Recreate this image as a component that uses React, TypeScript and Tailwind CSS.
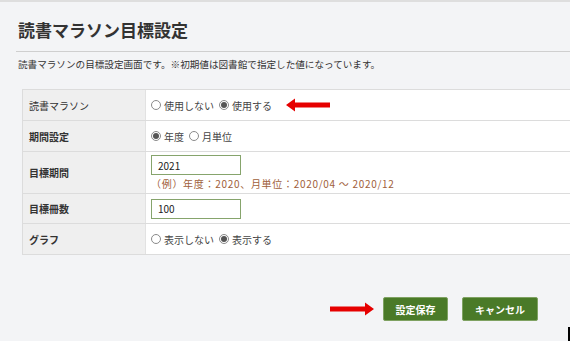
import React from "react";

const FONT = { fontFamily: '"Noto Sans CJK JP", "Noto Sans", sans-serif' };

function Radio({ checked, label }: { checked?: boolean; label: string }) {
  return (
    <span className="inline-flex items-center">
      <span className="w-[10px] h-[10px] rounded-full border border-[#8a8a8a] bg-white flex items-center justify-center mr-[3px]">
        {checked && <span className="w-[6px] h-[6px] rounded-full bg-[#555]" />}
      </span>
      <span className="mr-[5px]">{label}</span>
    </span>
  );
}

function Arrow({ dir }: { dir: "left" | "right" }) {
  return (
    <svg
      width="44"
      height="14"
      viewBox="0 0 44 14"
      className={dir === "left" ? "" : "rotate-180"}
    >
      <path d="M0 7L9 0.5V4.5H44V9.5H9V13.5Z" fill="#e60000" />
    </svg>
  );
}

function Row({
  label,
  bold = true,
  h,
  children,
}: {
  label: string;
  bold?: boolean;
  h: string;
  children: React.ReactNode;
}) {
  return (
    <div className={`flex border-b border-[#dcdcdc] ${h}`}>
      <div
        className={`w-[123px] shrink-0 bg-[#efefef] border-r border-[#e2e2e2] pl-[6px] flex items-center text-[10px] text-[#333] ${
          bold ? "font-bold" : ""
        }`}
      >
        {label}
      </div>
      <div className="flex-1 bg-white pl-[5px] flex flex-col justify-center text-[10px] text-[#444]">
        {children}
      </div>
    </div>
  );
}

export default function App() {
  return (
    <div
      className="relative min-h-screen bg-[#f3f4f6] border-t-2 border-[#dedede] overflow-hidden"
      style={FONT}
    >
      <div className="pl-4 pt-[15px]">
        <h1 className="pl-[2px] text-[17px] font-bold text-[#333] leading-[26px] pb-[8px] border-b border-[#cfcfcf]">
          読書マラソン目標設定
        </h1>
        <p className="pl-[2px] pt-[5px] text-[9.6px] text-[#333] leading-[14px]">
          読書マラソンの目標設定画面です。※初期値は図書館で指定した値になっています。
        </p>

        <div className="ml-[6px] mt-[18px] border-t border-l border-[#dcdcdc]">
          <Row label="読書マラソン" bold={false} h="h-[31px]">
            <div className="flex items-center">
              <Radio label="使用しない" />
              <Radio checked label="使用する" />
              <span className="ml-[9px] flex">
                <Arrow dir="left" />
              </span>
            </div>
          </Row>
          <Row label="期間設定" h="h-[31px]">
            <div className="flex items-center">
              <Radio checked label="年度" />
              <Radio label="月単位" />
            </div>
          </Row>
          <Row label="目標期間" h="h-[42px]">
            <div className="w-[90px] h-[20px] border border-[#86a46c] bg-white pl-[6px] flex items-center text-[#222]">
              2021
            </div>
            <div className="mt-[3px] text-[#a0603a] leading-[12px] tracking-[0.7px]">
              （例）年度：2020、月単位：2020/04 〜 2020/12
            </div>
          </Row>
          <Row label="目標冊数" h="h-[30px]">
            <div className="w-[90px] h-[20px] border border-[#86a46c] bg-white pl-[6px] flex items-center text-[#222]">
              100
            </div>
          </Row>
          <Row label="グラフ" h="h-[31px]">
            <div className="flex items-center">
              <Radio label="表示しない" />
              <Radio checked label="表示する" />
            </div>
          </Row>
        </div>

        <div className="flex items-center mt-[42px] pl-[314px]">
          <Arrow dir="right" />
          <button className="ml-[9px] w-[65px] h-[24px] bg-[#4a7a28] border border-[#7fa262] rounded-[2px] text-white text-[10px] font-bold">
            設定保存
          </button>
          <button className="ml-[14px] w-[76px] h-[24px] bg-[#4a7a28] border border-[#7fa262] rounded-[2px] text-white text-[10px] font-bold">
            キャンセル
          </button>
        </div>
      </div>
      <div className="absolute left-[568px] top-[325px] w-[2px] h-[16px] bg-black" />
    </div>
  );
}
